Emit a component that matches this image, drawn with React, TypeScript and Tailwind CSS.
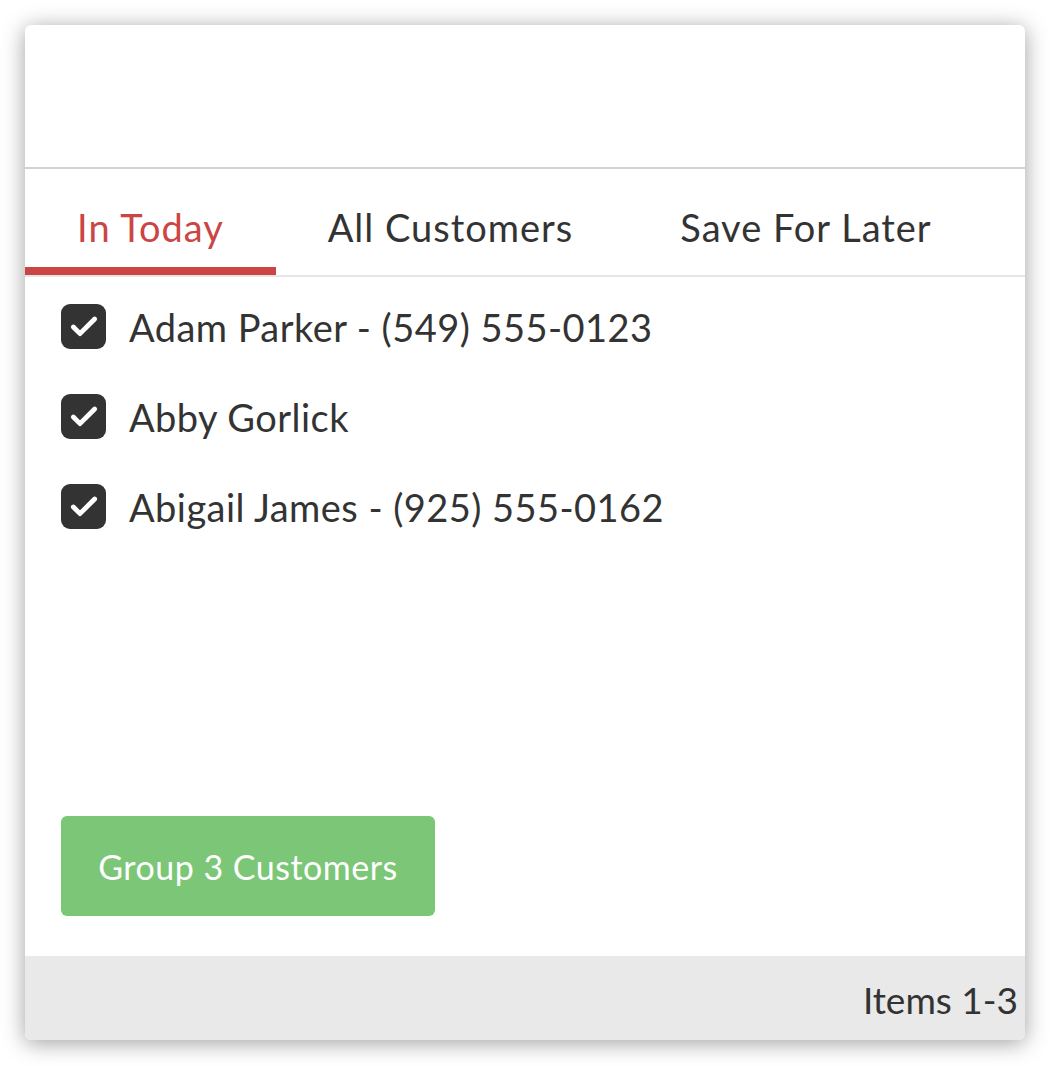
import { Check } from 'lucide-react';

const tabs = [
  { label: 'In Today', w: 'w-[251px]', active: true },
  { label: 'All Customers', w: 'w-[349px]', active: false },
  { label: 'Save For Later', w: 'w-[362px]', active: false },
];

const customers = ['Adam Parker - (549) 555-0123', 'Abby Gorlick', 'Abigail James - (925) 555-0162'];

export default function App() {
  return (
    <div className="min-h-[1066px] bg-white p-[25px] font-['Lato','Noto_Sans',sans-serif] text-[#333333]">
      <div className="flex h-[1015px] w-[1000px] flex-col overflow-hidden rounded-[6px] bg-white shadow-[0_3px_22px_rgba(0,0,0,0.38)]">
        {/* empty header */}
        <div className="h-[144px] shrink-0 border-b-2 border-[#d2d2d2]" />

        {/* tabs */}
        <div className="flex h-[108px] shrink-0 border-b-2 border-[#e6e6e6]">
          {tabs.map((t) => (
            <div
              key={t.label}
              className={
                t.active
                  ? `${t.w} flex items-center justify-center border-b-[8px] border-[#cc4545] pt-[18px] text-[38px] tracking-[1px] text-[#cc4545]`
                  : `${t.w} flex items-center justify-center border-b-[8px] border-transparent pt-[18px] text-[38px] tracking-[1px]`
              }
            >
              {t.label}
            </div>
          ))}
        </div>

        {/* customer list */}
        <div className="flex flex-1 flex-col px-[36px] pt-[27px]">
          <div className="flex flex-col gap-[45px]">
            {customers.map((c) => (
              <label key={c} className="flex h-[45px] items-center gap-[23px]">
                <span className="flex h-[45px] w-[45px] shrink-0 items-center justify-center rounded-[9px] bg-[#333333]">
                  <Check size={32} strokeWidth={3.6} className="text-white" />
                </span>
                <span className="text-[38px] leading-none tracking-[0.45px]">{c}</span>
              </label>
            ))}
          </div>

          <div className="mt-auto mb-[40px]">
            <button className="h-[100px] w-[374px] rounded-[6px] bg-[#7bc677] text-[34px] tracking-[0.5px] text-white">
              Group 3 Customers
            </button>
          </div>
        </div>

        {/* footer */}
        <div className="flex h-[84px] shrink-0 items-center justify-end bg-[#e9e9e9] px-[7px] pt-[4px] text-[37px]">
          Items 1-3
        </div>
      </div>
    </div>
  );
}
